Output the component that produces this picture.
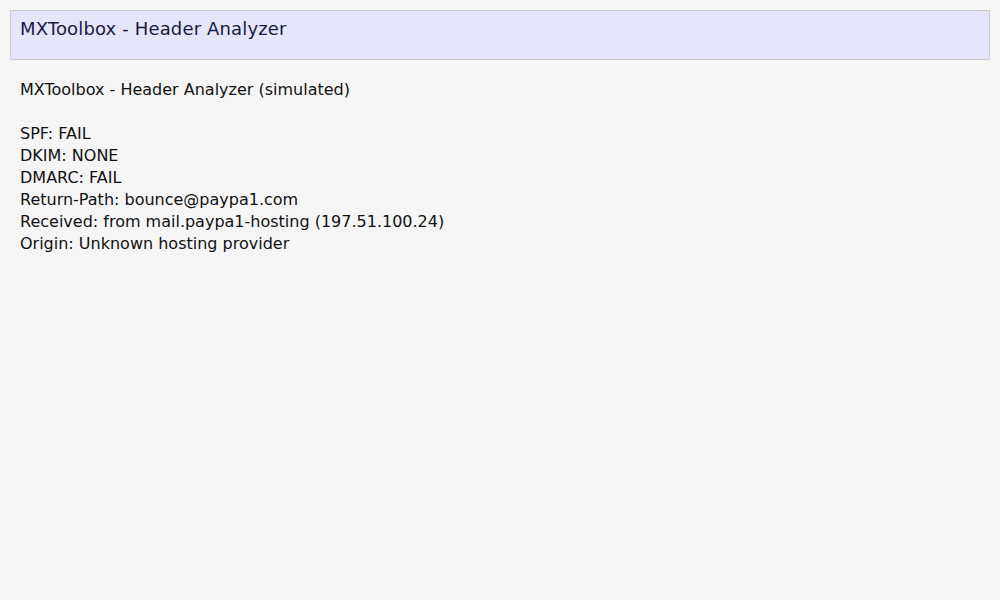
import React from "react";

const lines = [
  "MXToolbox - Header Analyzer (simulated)",
  "",
  "SPF: FAIL",
  "DKIM: NONE",
  "DMARC: FAIL",
  "Return-Path: bounce@paypa1.com",
  "Received: from mail.paypa1-hosting (197.51.100.24)",
  "Origin: Unknown hosting provider",
];

export default function App() {
  return (
    <div className="min-h-[600px] w-full bg-[#f5f5f5] p-[10px] font-['DejaVu_Sans',sans-serif]">
      <div className="h-[50px] border border-[#cccccc] bg-[#e6e6fa] pl-[9px] pt-[7px]">
        <div className="text-[18px] leading-[21px] tracking-[0.15px] text-[#1a1a40]">MXToolbox - Header Analyzer</div>
      </div>
      <div className="pl-[10px] pt-[19px] text-[16px] leading-[22px] text-[#111111]">
        {lines.map((l, i) => (
          <div key={i} className="h-[22px] whitespace-pre">
            {l}
          </div>
        ))}
      </div>
    </div>
  );
}
